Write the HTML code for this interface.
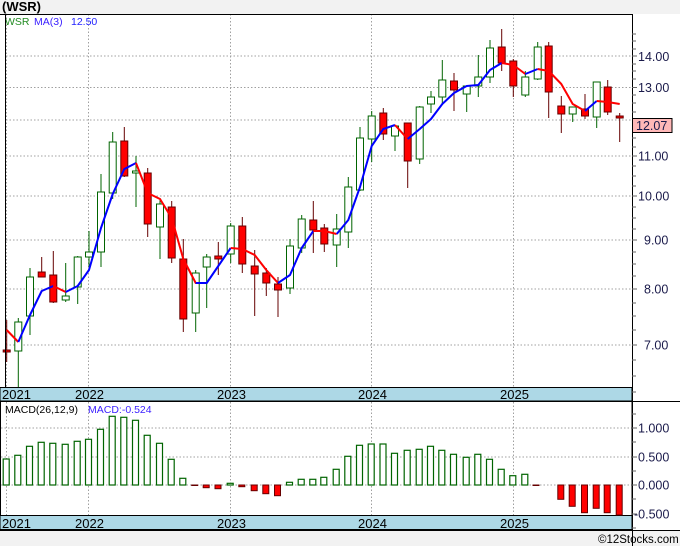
<!DOCTYPE html>
<html><head><meta charset="utf-8"><style>
html,body{margin:0;padding:0;background:#fff;}
svg{display:block;font-family:"Liberation Sans",sans-serif;}
</style></head><body>
<svg width="680" height="546" viewBox="0 0 680 546" xmlns="http://www.w3.org/2000/svg">
<rect x="0" y="0" width="680" height="546" fill="#fff"/>
<rect x="0" y="0" width="680" height="14" fill="#f2f2f2"/>
<rect x="0" y="530" width="680" height="16" fill="#f2f2f2"/>
<text x="2" y="11" font-size="13" font-weight="bold" fill="#000">(WSR)</text>
<!-- grid -->
<g stroke="#a0a0a0" stroke-width="1" stroke-dasharray="1.5,2">
<line x1="6" y1="56" x2="632" y2="56"/><line x1="6" y1="87.5" x2="632" y2="87.5"/><line x1="6" y1="120" x2="632" y2="120"/><line x1="6" y1="156" x2="632" y2="156"/><line x1="6" y1="196" x2="632" y2="196"/><line x1="6" y1="240" x2="632" y2="240"/><line x1="6" y1="289" x2="632" y2="289"/><line x1="6" y1="345" x2="632" y2="345"/>
<line x1="6.5" y1="14" x2="6.5" y2="387"/><line x1="88.5" y1="14" x2="88.5" y2="387"/><line x1="230.5" y1="14" x2="230.5" y2="387"/><line x1="371.5" y1="14" x2="371.5" y2="387"/><line x1="513.5" y1="14" x2="513.5" y2="387"/>
<line x1="1" y1="428" x2="632" y2="428"/><line x1="1" y1="457" x2="632" y2="457"/><line x1="1" y1="485" x2="632" y2="485"/>
<line x1="6.5" y1="402" x2="6.5" y2="515"/><line x1="88.5" y1="402" x2="88.5" y2="515"/><line x1="230.5" y1="402" x2="230.5" y2="515"/><line x1="371.5" y1="402" x2="371.5" y2="515"/><line x1="513.5" y1="402" x2="513.5" y2="515"/>
</g>
<text x="5" y="25" font-size="10.5" fill="#228b22">WSR</text>
<text x="34" y="25" font-size="10.5" fill="#3a1fff">MA(3)</text>
<text x="71" y="25" font-size="10.5" fill="#1f1fff">12.50</text>
<!-- candles -->
<g stroke-width="1">
<g stroke="#660000" fill="#ff0000">
<line x1="6.7" y1="320" x2="6.7" y2="362"/><rect x="3.2" y="350" width="7" height="2"/>
<line x1="41.7" y1="257" x2="41.7" y2="277"/><rect x="38.2" y="272" width="7" height="5"/>
<line x1="53.3" y1="251" x2="53.3" y2="303"/><rect x="49.8" y="275" width="7" height="27"/>
<line x1="124.3" y1="127" x2="124.3" y2="177"/><rect x="120.8" y="141" width="7" height="35"/>
<line x1="147.7" y1="168" x2="147.7" y2="237"/><rect x="144.2" y="173" width="7" height="51"/>
<line x1="171.7" y1="201" x2="171.7" y2="263"/><rect x="168.2" y="207" width="7" height="51"/>
<line x1="183.3" y1="239" x2="183.3" y2="332"/><rect x="179.8" y="259" width="7" height="60"/>
<line x1="218.3" y1="242" x2="218.3" y2="275"/><rect x="214.8" y="256" width="7" height="3"/>
<line x1="242.3" y1="217" x2="242.3" y2="273"/><rect x="238.8" y="226" width="7" height="38"/>
<line x1="254.7" y1="250" x2="254.7" y2="316"/><rect x="251.2" y="266" width="7" height="8"/>
<line x1="266.3" y1="268" x2="266.3" y2="296"/><rect x="262.8" y="273" width="7" height="10"/>
<line x1="278" y1="277" x2="278" y2="317"/><rect x="274.5" y="284" width="7" height="6"/>
<line x1="313.3" y1="201" x2="313.3" y2="253"/><rect x="309.8" y="220" width="7" height="10"/>
<line x1="324.3" y1="224" x2="324.3" y2="252"/><rect x="320.8" y="228" width="7" height="16"/>
<line x1="383.3" y1="108" x2="383.3" y2="140"/><rect x="379.8" y="113" width="7" height="21"/>
<line x1="407.7" y1="123" x2="407.7" y2="188"/><rect x="404.2" y="123" width="7" height="38"/>
<line x1="454" y1="73" x2="454" y2="111"/><rect x="450.5" y="81" width="7" height="9"/>
<line x1="501.7" y1="29" x2="501.7" y2="71"/><rect x="498.2" y="47" width="7" height="16"/>
<line x1="513.3" y1="59" x2="513.3" y2="97"/><rect x="509.8" y="61" width="7" height="25"/>
<line x1="548.7" y1="42" x2="548.7" y2="118"/><rect x="545.2" y="46" width="7" height="46"/>
<line x1="561.3" y1="96" x2="561.3" y2="133"/><rect x="557.8" y="106" width="7" height="8"/>
<line x1="585" y1="94" x2="585" y2="119"/><rect x="581.5" y="109" width="7" height="7"/>
<line x1="607.7" y1="80" x2="607.7" y2="115"/><rect x="604.2" y="87" width="7" height="25"/>
<line x1="619.7" y1="113" x2="619.7" y2="142"/><rect x="616.2" y="116" width="7" height="2"/>
</g>
<g stroke="#006400" fill="#fff">
<line x1="18.3" y1="318" x2="18.3" y2="387"/><rect x="14.8" y="322" width="7" height="29"/>
<line x1="30" y1="268" x2="30" y2="335"/><rect x="26.5" y="277" width="7" height="39"/>
<line x1="65.7" y1="263" x2="65.7" y2="302"/><rect x="62.2" y="296" width="7" height="4"/>
<line x1="77.7" y1="256" x2="77.7" y2="304"/><rect x="74.2" y="257" width="7" height="30"/>
<line x1="89" y1="231" x2="89" y2="267"/><rect x="85.5" y="252" width="7" height="5"/>
<line x1="101" y1="174" x2="101" y2="267"/><rect x="97.5" y="192" width="7" height="60"/>
<line x1="112.7" y1="132" x2="112.7" y2="199"/><rect x="109.2" y="142" width="7" height="51"/>
<line x1="136" y1="156" x2="136" y2="207"/><rect x="132.5" y="171" width="7" height="2"/>
<line x1="160" y1="198" x2="160" y2="259"/><rect x="156.5" y="204" width="7" height="23"/>
<line x1="195.7" y1="270" x2="195.7" y2="332"/><rect x="192.2" y="273" width="7" height="40"/>
<line x1="206.7" y1="254" x2="206.7" y2="308"/><rect x="203.2" y="257" width="7" height="10"/>
<line x1="230.7" y1="223" x2="230.7" y2="263"/><rect x="227.2" y="226" width="7" height="28"/>
<line x1="290" y1="239" x2="290" y2="294"/><rect x="286.5" y="246" width="7" height="42"/>
<line x1="301.7" y1="215" x2="301.7" y2="253"/><rect x="298.2" y="219" width="7" height="29"/>
<line x1="336.7" y1="214" x2="336.7" y2="267"/><rect x="333.2" y="229" width="7" height="16"/>
<line x1="348.3" y1="177" x2="348.3" y2="248"/><rect x="344.8" y="187" width="7" height="45"/>
<line x1="360" y1="127" x2="360" y2="191"/><rect x="356.5" y="138" width="7" height="52"/>
<line x1="371.7" y1="111" x2="371.7" y2="162"/><rect x="368.2" y="116" width="7" height="23"/>
<line x1="395" y1="125" x2="395" y2="151"/><rect x="391.5" y="126" width="7" height="10"/>
<line x1="419.7" y1="106" x2="419.7" y2="164"/><rect x="416.2" y="107" width="7" height="52"/>
<line x1="431" y1="91" x2="431" y2="113"/><rect x="427.5" y="97" width="7" height="7"/>
<line x1="442.3" y1="60" x2="442.3" y2="105"/><rect x="438.8" y="80" width="7" height="17"/>
<line x1="466.7" y1="86" x2="466.7" y2="112"/><rect x="463.2" y="86" width="7" height="8"/>
<line x1="478.3" y1="55" x2="478.3" y2="97"/><rect x="474.8" y="77" width="7" height="9"/>
<line x1="490" y1="40" x2="490" y2="83"/><rect x="486.5" y="48" width="7" height="29"/>
<line x1="525.3" y1="71" x2="525.3" y2="97"/><rect x="521.8" y="77" width="7" height="18"/>
<line x1="537.7" y1="42" x2="537.7" y2="80"/><rect x="534.2" y="47" width="7" height="32"/>
<line x1="572.7" y1="107" x2="572.7" y2="122"/><rect x="569.2" y="107" width="7" height="7"/>
<line x1="596.7" y1="82" x2="596.7" y2="128"/><rect x="593.2" y="82" width="7" height="35"/>
</g>
</g>
<!-- MA -->
<g fill="none" stroke-width="2" stroke-linejoin="round">
<polyline stroke="#ff0000" points="6.7,330 18.3,342"/>
<polyline stroke="#0000ff" points="18.3,342 30,315 41.7,291 53.3,286"/>
<polyline stroke="#ff0000" points="53.3,286 65.7,292"/>
<polyline stroke="#0000ff" points="65.7,292 77.7,286 89,270 101,228 112.7,194 124.3,169 136,163"/>
<polyline stroke="#ff0000" points="136,163 147.7,193 160,199 171.7,218 183.3,259 195.7,283 206.7,283"/>
<polyline stroke="#0000ff" points="195.7,283 206.7,283 218.3,266 230.7,248"/>
<polyline stroke="#ff0000" points="230.7,248 242.3,249 254.7,255 266.3,270 278,283"/>
<polyline stroke="#0000ff" points="278,283 290,275 301.7,248 313.3,231"/>
<polyline stroke="#ff0000" points="313.3,231 324.3,231 336.7,234"/>
<polyline stroke="#0000ff" points="336.7,234 348.3,220 360,187 371.7,146 383.3,129 395,125"/>
<polyline stroke="#ff0000" points="395,125 407.7,139"/>
<polyline stroke="#0000ff" points="407.7,139 419.7,129 431,119 442.3,104 454,93 466.7,86 478.3,85 490,70 501.7,63"/>
<polyline stroke="#ff0000" points="501.7,63 513.3,65 525.3,74"/>
<polyline stroke="#0000ff" points="525.3,74 537.7,69"/>
<polyline stroke="#ff0000" points="537.7,69 548.7,71 561.3,84 572.7,104 585,111"/>
<polyline stroke="#0000ff" points="585,111 596.7,101"/>
<polyline stroke="#ff0000" points="596.7,101 607.7,102 619.7,104"/>
</g>
<!-- frames -->
<line x1="0" y1="14.5" x2="632" y2="14.5" stroke="#000"/>
<line x1="5.5" y1="14" x2="5.5" y2="388" stroke="#000"/>
<rect x="0" y="387.5" width="632" height="13.5" fill="#add8e6" stroke="#000"/>
<rect x="0.5" y="401.5" width="631.5" height="128" fill="none" stroke="#000"/>
<rect x="0" y="515.5" width="632" height="14" fill="#add8e6" stroke="#000"/>
<line x1="0" y1="530.5" x2="680" y2="530.5" stroke="#000"/>
<line x1="632" y1="401.5" x2="680" y2="401.5" stroke="#000"/>
<line x1="632.5" y1="14" x2="632.5" y2="546" stroke="#000"/>
<g font-size="13" fill="#000">
<text x="2" y="399">2021</text><text x="75" y="399">2022</text><text x="217" y="399">2023</text><text x="358" y="399">2024</text><text x="500" y="399">2025</text>
<text x="2" y="528">2021</text><text x="75" y="528">2022</text><text x="217" y="528">2023</text><text x="358" y="528">2024</text><text x="500" y="528">2025</text>
</g>
<!-- axis ticks -->
<g stroke="#666">
<line x1="632" y1="34" x2="636" y2="34"/><line x1="632" y1="41" x2="636" y2="41"/><line x1="632" y1="49" x2="636" y2="49"/><line x1="632" y1="56" x2="637" y2="56"/><line x1="632" y1="64" x2="636" y2="64"/><line x1="632" y1="71" x2="636" y2="71"/><line x1="632" y1="79" x2="636" y2="79"/><line x1="632" y1="87.5" x2="637" y2="87.5"/><line x1="632" y1="95" x2="636" y2="95"/><line x1="632" y1="103" x2="636" y2="103"/><line x1="632" y1="112" x2="636" y2="112"/><line x1="632" y1="129" x2="636" y2="129"/><line x1="632" y1="138" x2="636" y2="138"/><line x1="632" y1="147" x2="636" y2="147"/><line x1="632" y1="156" x2="637" y2="156"/><line x1="632" y1="166" x2="636" y2="166"/><line x1="632" y1="176" x2="636" y2="176"/><line x1="632" y1="186" x2="636" y2="186"/><line x1="632" y1="196" x2="637" y2="196"/><line x1="632" y1="207" x2="636" y2="207"/><line x1="632" y1="218" x2="636" y2="218"/><line x1="632" y1="229" x2="636" y2="229"/><line x1="632" y1="240" x2="637" y2="240"/><line x1="632" y1="252" x2="636" y2="252"/><line x1="632" y1="264" x2="636" y2="264"/><line x1="632" y1="276" x2="636" y2="276"/><line x1="632" y1="289" x2="637" y2="289"/><line x1="632" y1="303" x2="636" y2="303"/><line x1="632" y1="316" x2="636" y2="316"/><line x1="632" y1="330" x2="636" y2="330"/><line x1="632" y1="345" x2="637" y2="345"/><line x1="632" y1="360" x2="636" y2="360"/><line x1="632" y1="376" x2="636" y2="376"/><line x1="632" y1="392" x2="636" y2="392"/>
<line x1="632" y1="414" x2="636" y2="414"/><line x1="632" y1="428" x2="637" y2="428"/><line x1="632" y1="442" x2="636" y2="442"/><line x1="632" y1="457" x2="637" y2="457"/><line x1="632" y1="471" x2="636" y2="471"/><line x1="632" y1="485" x2="637" y2="485"/><line x1="632" y1="499" x2="636" y2="499"/><line x1="632" y1="514" x2="637" y2="514"/><line x1="632" y1="528" x2="636" y2="528"/>
</g>
<g font-size="12.5" fill="#1a1a4a">
<text x="638" y="61">14.00</text><text x="638" y="92">13.00</text><text x="638" y="160.5">11.00</text><text x="638" y="200.5">10.00</text><text x="644" y="244.5">9.00</text><text x="644" y="293.5">8.00</text><text x="644" y="349.5">7.00</text>
<text x="638" y="432.5">1.000</text><text x="638" y="461.5">0.500</text><text x="638" y="489.5">0.000</text><text x="634" y="518.5">-0.500</text>
</g>
<rect x="632.5" y="118.5" width="39.5" height="14" fill="#ffb8b8" stroke="#000"/>
<text x="636" y="130" font-size="12.5" fill="#1a1a4a">12.07</text>
<!-- MACD -->
<text x="5" y="413" font-size="10.5" fill="#000">MACD(26,12,9)</text>
<text x="88" y="413" font-size="10.5" fill="#3a1fff">MACD:-0.524</text>
<g stroke="#006400" fill="#fff" stroke-width="1.2">
<rect x="3.2" y="459" width="6" height="26"/><rect x="14.8" y="455.3" width="6" height="29.7"/><rect x="26.5" y="446.3" width="6" height="38.7"/><rect x="38.2" y="442.3" width="6" height="42.7"/><rect x="49.8" y="443.3" width="6" height="41.7"/><rect x="62.2" y="444.3" width="6" height="40.7"/><rect x="74.2" y="441.3" width="6" height="43.7"/><rect x="85.5" y="439.3" width="6" height="45.7"/><rect x="97.5" y="429.3" width="6" height="55.7"/><rect x="109.2" y="416.3" width="6" height="68.7"/><rect x="120.8" y="417.3" width="6" height="67.7"/><rect x="132.5" y="420.3" width="6" height="64.7"/><rect x="144.2" y="435.3" width="6" height="49.7"/><rect x="156.5" y="443.3" width="6" height="41.7"/><rect x="168.2" y="459.3" width="6" height="25.7"/><rect x="179.8" y="478.3" width="6" height="6.7"/>
<rect x="227.2" y="483.3" width="6" height="1.7"/>
<rect x="286.5" y="482.3" width="6" height="2.7"/><rect x="298.2" y="479.3" width="6" height="5.7"/><rect x="309.8" y="479.3" width="6" height="5.7"/><rect x="320.8" y="477.3" width="6" height="7.7"/><rect x="333.2" y="469.3" width="6" height="15.7"/><rect x="344.8" y="456.3" width="6" height="28.7"/><rect x="356.5" y="445.3" width="6" height="39.7"/><rect x="368.2" y="444" width="6" height="41"/><rect x="380" y="444" width="6" height="41"/><rect x="391.5" y="453.3" width="6" height="31.7"/><rect x="404.2" y="450.3" width="6" height="34.7"/><rect x="416.2" y="449.3" width="6" height="35.7"/><rect x="427.5" y="446.3" width="6" height="38.7"/><rect x="438.8" y="450.3" width="6" height="34.7"/><rect x="450.5" y="454.3" width="6" height="30.7"/><rect x="463.2" y="457.3" width="6" height="27.7"/><rect x="474.8" y="454.3" width="6" height="30.7"/><rect x="486.5" y="459.3" width="6" height="25.7"/><rect x="498.2" y="469.3" width="6" height="15.7"/><rect x="509.8" y="475.7" width="6" height="9.3"/><rect x="521.8" y="474.3" width="6" height="10.7"/>
</g>
<g stroke="#660000" fill="#ff0000">
<rect x="191.7" y="485" width="6" height="0.5"/><rect x="203.2" y="485" width="6" height="2.7"/><rect x="215" y="485" width="6" height="3.7"/><rect x="238.8" y="485" width="6" height="1.7"/><rect x="251.2" y="485" width="6" height="5.7"/><rect x="262.8" y="485" width="6" height="8.7"/><rect x="274.5" y="485" width="6" height="10.7"/><rect x="286.5" y="485" width="0" height="0"/>
<rect x="533" y="485" width="6" height="0.5"/>
<rect x="557.8" y="485" width="6" height="14.3"/><rect x="569.2" y="485" width="6" height="21.3"/><rect x="581.5" y="485" width="6" height="27.7"/><rect x="593.2" y="485" width="6" height="23.3"/><rect x="604.2" y="485" width="6" height="27.7"/><rect x="616.2" y="485" width="6" height="30"/>
</g>
<text x="598" y="543" font-size="11.5" fill="#000">©12Stocks.com</text>
</svg>
</body></html>
